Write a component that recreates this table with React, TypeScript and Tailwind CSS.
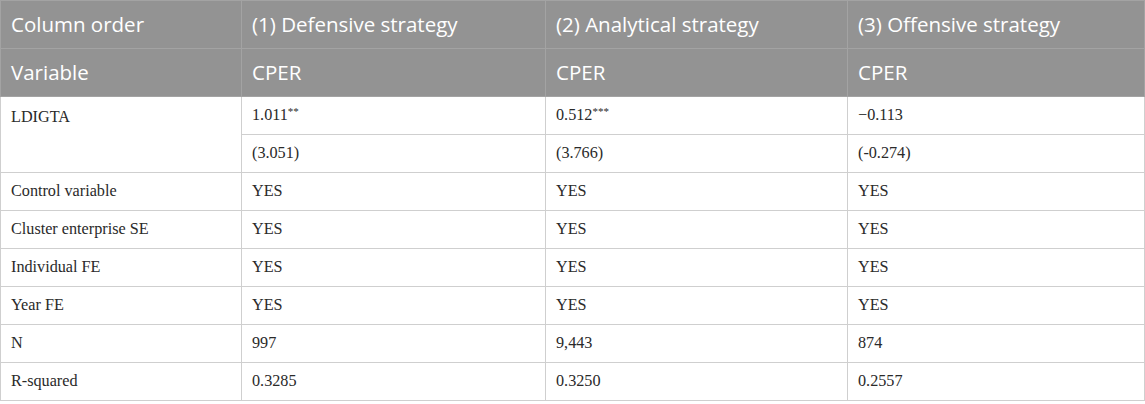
const head = ["Column order", "(1) Defensive strategy", "(2) Analytical strategy", "(3) Offensive strategy"];

const rows: string[][] = [
  ["Control variable", "YES", "YES", "YES"],
  ["Cluster enterprise SE", "YES", "YES", "YES"],
  ["Individual FE", "YES", "YES", "YES"],
  ["Year FE", "YES", "YES", "YES"],
  ["N", "997", "9,443", "874"],
  ["R-squared", "0.3285", "0.3250", "0.2557"],
];

const th = "h-[48px] border border-[#a3a3a3] px-[10px] text-left align-middle font-normal text-[20.5px] text-white";
const td = "h-[38px] border border-[#cfcfcf] px-[10px] text-left align-middle text-[16.2px] text-[#2a2a2a]";

export default function App() {
  return (
    <div className="w-[1145px] bg-white">
      <table className="w-[1144px] table-fixed border-collapse border border-[#bdbdbd]">
        <colgroup>
          <col className="w-[241px]" />
          <col className="w-[304px]" />
          <col className="w-[302px]" />
          <col className="w-[297px]" />
        </colgroup>
        <thead className="bg-[#939393] font-['Open_Sans',sans-serif]">
          <tr>
            {head.map((h) => (
              <th key={h} className={th}>{h}</th>
            ))}
          </tr>
          <tr>
            <th className={th}>Variable</th>
            <th className={th}>CPER</th>
            <th className={th}>CPER</th>
            <th className={th}>CPER</th>
          </tr>
        </thead>
        <tbody className="font-['Liberation_Serif',serif]">
          <tr>
            <td rowSpan={2} className={td + " align-top pt-[8px]"}>LDIGTA</td>
            <td className={td}>1.011<sup className="text-[11px]">**</sup></td>
            <td className={td}>0.512<sup className="text-[11px]">***</sup></td>
            <td className={td}>−0.113</td>
          </tr>
          <tr>
            <td className={td}>(3.051)</td>
            <td className={td}>(3.766)</td>
            <td className={td}>(-0.274)</td>
          </tr>
          {rows.map((r) => (
            <tr key={r[0]}>
              {r.map((c, i) => (
                <td key={i} className={td}>{c}</td>
              ))}
            </tr>
          ))}
        </tbody>
      </table>
    </div>
  );
}
